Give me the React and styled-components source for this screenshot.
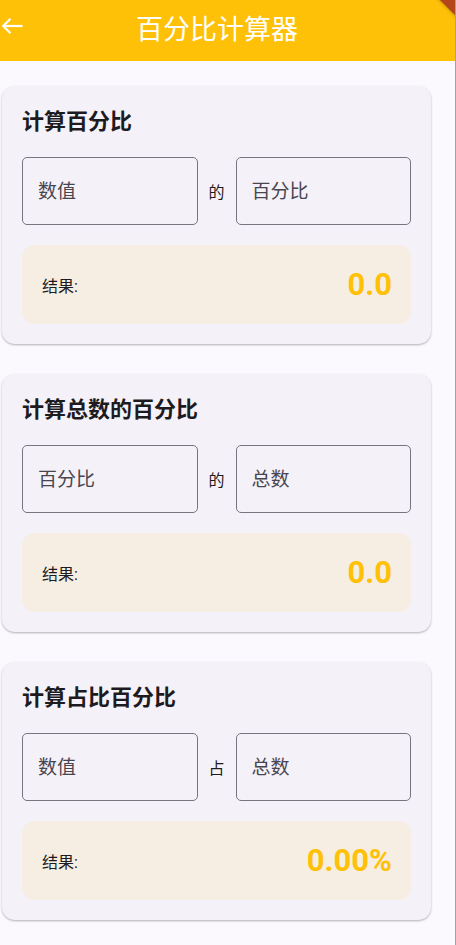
import styled, { createGlobalStyle } from 'styled-components';

const GlobalStyle = createGlobalStyle`
  html, body {
    margin: 0;
    padding: 0;
    background: #fbf8fe;
  }
  body {
    font-family: Roboto, "Noto Sans CJK SC", sans-serif;
  }
  * {
    box-sizing: border-box;
  }
`;

const calculators = [
  { title: '计算百分比', first: '数值', joiner: '的', second: '百分比', result: '0.0' },
  { title: '计算总数的百分比', first: '百分比', joiner: '的', second: '总数', result: '0.0' },
  { title: '计算占比百分比', first: '数值', joiner: '占', second: '总数', result: '0.00%' },
];

function BackArrow() {
  return (
    <svg width='22' height='18' viewBox='0 0 22 18' fill='none' stroke='#ffffff' strokeWidth='2.2'>
      <path d='M21.5 9H2.5' />
      <path d='M9.5 1.8L2.2 9l7.3 7.2' />
    </svg>
  );
}

function App() {
  return (
    <>
      <GlobalStyle />
      <Screen>
        <AppBar>
          <BackButton type='button' aria-label='返回'>
            <BackArrow />
          </BackButton>
          <Title>百分比计算器</Title>
          <DebugBanner />
        </AppBar>
        <Content>
          {calculators.map((calc) => (
            <Card key={calc.title}>
              <CardTitle>{calc.title}</CardTitle>
              <InputRow>
                <Field placeholder={calc.first} inputMode='decimal' />
                <Joiner>{calc.joiner}</Joiner>
                <Field placeholder={calc.second} inputMode='decimal' />
              </InputRow>
              <ResultBox>
                <ResultLabel>结果:</ResultLabel>
                <ResultValue>{calc.result}</ResultValue>
              </ResultBox>
            </Card>
          ))}
        </Content>
      </Screen>
    </>
  );
}

export default App;

const Screen = styled.div`
  width: 456px;
  min-height: 100vh;
  background: #fbf8fe;
  border-right: 1px solid #a3a1a6;
`;

const AppBar = styled.header`
  position: relative;
  display: flex;
  align-items: center;
  height: 61px;
  background: #ffc107;
  overflow: hidden;
`;

const BackButton = styled.button`
  display: flex;
  align-items: center;
  flex-shrink: 0;
  width: 23px;
  height: 18px;
  margin: -9px 0 0 0;
  padding: 0 0 0 1px;
  border: none;
  background: none;
  cursor: pointer;

  svg {
    flex-shrink: 0;
  }
`;

const Title = styled.h1`
  flex: 1;
  margin: 0;
  padding-right: 44px;
  text-align: center;
  font-size: 27px;
  font-weight: 400;
  line-height: 1;
  color: #ffffff;
`;

const DebugBanner = styled.div`
  position: absolute;
  top: -41px;
  right: -41px;
  width: 44px;
  height: 88px;
  background: #b5461b;
  transform: rotate(-45deg);
  transform-origin: center;
  box-shadow: 0 0 4px rgba(0, 0, 0, 0.35);
`;

const Content = styled.main`
  display: flex;
  flex-direction: column;
  gap: 30px;
  padding: 25px 0 25px 2px;
`;

const Card = styled.section`
  width: 429px;
  padding: 20px;
  background: #f4f2f8;
  border-radius: 13px;
  box-shadow: 0 1px 2px rgba(0, 0, 0, 0.22), 0 1px 3px rgba(0, 0, 0, 0.08);
`;

const CardTitle = styled.h2`
  margin: 0 0 19px;
  font-size: 22px;
  font-weight: 700;
  line-height: 32px;
  color: #1d1b20;
`;

const InputRow = styled.div`
  display: flex;
  align-items: center;
`;

const Field = styled.input`
  flex: 1;
  min-width: 0;
  height: 68px;
  padding: 0 15px;
  border: 1px solid #79747e;
  border-radius: 5px;
  background: transparent;
  font-family: Roboto, "Noto Sans CJK SC", sans-serif;
  font-size: 19px;
  color: #1d1b20;
  outline: none;

  &::placeholder {
    color: #49454f;
  }
`;

const Joiner = styled.span`
  width: 38px;
  text-align: center;
  font-size: 16px;
  color: #1d1b20;
`;

const ResultBox = styled.div`
  display: flex;
  align-items: center;
  justify-content: space-between;
  height: 79px;
  margin-top: 20px;
  padding: 0 19px 0 20px;
  background: #f6eee3;
  border-radius: 12px;
`;

const ResultLabel = styled.span`
  font-size: 16px;
  color: #1d1b20;
`;

const ResultValue = styled.span`
  font-size: 31px;
  font-weight: 700;
  color: #ffc107;
`;
